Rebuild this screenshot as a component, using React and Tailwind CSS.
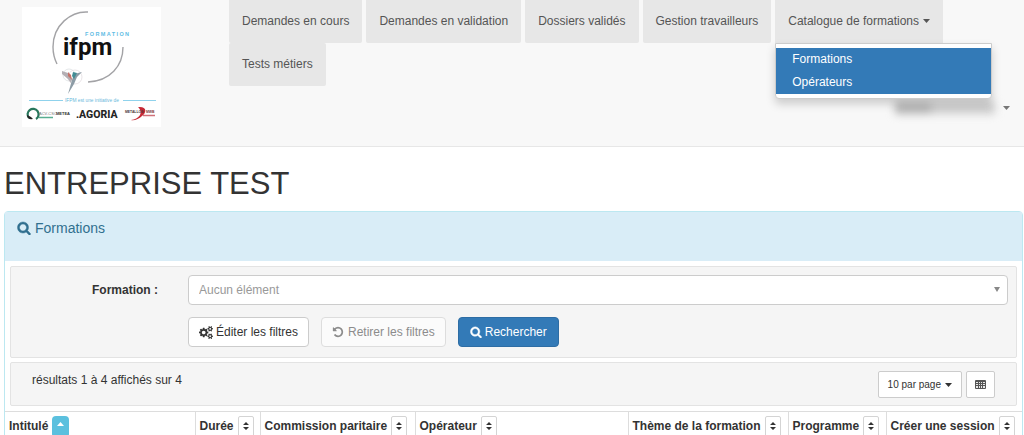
import React, { useState } from "react";

const navItems = [
  "Demandes en cours",
  "Demandes en validation",
  "Dossiers validés",
  "Gestion travailleurs",
];

const columns = [
  { label: "Intitulé", width: "w-[190px]", sorted: true },
  { label: "Durée", width: "w-[65px]" },
  { label: "Commission paritaire", width: "w-[155px]" },
  { label: "Opérateur", width: "w-auto" },
  { label: "Thème de la formation", width: "w-[160px]" },
  { label: "Programme", width: "w-[98px]" },
  { label: "Créer une session", width: "w-[136px]" },
];

const SMALL_GEAR =
  "v140q0 16-149 31-12 27-30 52 51 113 51 138 0 4-4 7-122 71-124 71-8 0-46-47t-52-68q-20 2-30 2t-30-2q-14 21-52 68t-46 47q-2 0-124-71-4-3-4-7 0-25 51-138-18-25-30-52-149-15-149-31v-140q0-16 149-31 13-29 30-52-51-113-51-138 0-4 4-7 4-2 35-20t59-34 30-16q8 0 46 46.5t52 67.5q20-2 30-2t30 2q51-71 92-112l6-2q4 0 124 70 4 3 4 7 0 25-51 138 17 23 30 52 149 15 149 31z";

const SearchIcon = ({ className }) => (
  <svg viewBox="0 0 1792 1792" fill="currentColor" stroke="currentColor" strokeWidth="60" className={className}>
    <path d="M1216 832q0-185-131.5-316.5t-316.5-131.5-316.5 131.5-131.5 316.5 131.5 316.5 316.5 131.5 316.5-131.5 131.5-316.5zm512 832q0 52-38 90t-90 38q-54 0-90-38l-343-342q-179 124-399 124-143 0-273.5-55.5t-225-150-150-225-55.5-273.5 55.5-273.5 150-225 225-150 273.5-55.5 273.5 55.5 225 150 150 225 55.5 273.5q0 220-124 399l343 343q37 37 37 90z" />
  </svg>
);

const UndoIcon = () => (
  <svg viewBox="0 0 1792 1792" fill="currentColor" className="size-3">
    <path d="M1664 896q0 156-61 298t-164 245-245 164-298 61q-172 0-327-72.5t-264-204.5q-7-10-6.5-22.5t8.5-20.5l137-138q10-9 25-9 16 2 23 12 73 95 179 147t225 52q104 0 198.5-40.5t163.5-109.5 109.5-163.5 40.5-198.5-40.5-198.5-109.5-163.5-163.5-109.5-198.5-40.5q-98 0-188 35.5t-160 101.5l137 138q31 30 14 69-17 40-59 40h-448q-26 0-45-19t-19-45v-448q0-42 40-59 39-17 69 14l130 129q107-101 244.5-156.5t284.5-55.5q156 0 298 61t245 164 164 245 61 298z" />
  </svg>
);

const CogsIcon = () => (
  <svg viewBox="-64 0 1920 1792" fill="currentColor" className="h-[13px] w-[14px]">
    <path d="M832 896q0-106-75-181t-181-75-181 75-75 181 75 181 181 75 181-75 75-181zm384-91v185q0 10-7 19.5t-16 10.5l-155 24q-11 35-32 76 34 48 90 115 7 11 7 20 0 12-7 19-23 30-82.5 89.5t-78.5 59.5q-11 0-21-7l-115-90q-37 19-77 31-11 108-23 155-7 24-30 24h-186q-11 0-20-7.5t-10-17.5l-23-153q-34-10-75-31l-118 89q-7 7-20 7-11 0-21-8-144-133-144-160 0-9 7-19 10-14 41-53t47-61q-23-44-35-82l-152-24q-10-1-17-9.5t-7-19.5v-185q0-10 7-19.5t16-10.5l155-24q11-35 32-76-34-48-90-115-7-11-7-20 0-12 7-20 22-30 82-89t79-59q11 0 21 7l115 90q34-18 77-32 11-108 23-154 7-24 30-24h186q11 0 20 7.5t10 17.5l23 153q34 10 75 31l118-89q8-7 20-7 11 0 21 8 144 133 144 160 0 8-7 19-12 16-42 54t-45 60q23 48 34 82l152 23q10 2 17 10.5t7 19.5z" />
    <path d={`M1600 1408q0-52-38-90t-90-38-90 38-38 90q0 53 37.500 90.500t90.500 37.500 90.500-37.500 37.500-90.500zM1856 1338${SMALL_GEAR}`} />
    <path d={`M1600 384q0-52-38-90t-90-38-90 38-38 90q0 53 37.500 90.500t90.500 37.500 90.500-37.500 37.500-90.500zM1856 314${SMALL_GEAR}`} />
  </svg>
);

const TableIcon = () => (
  <svg viewBox="0 0 11 9" className="h-[9px] w-[11px]">
    <rect width="11" height="9" rx="1" fill="#555" />
    <path d="M1 2h2v1H1zM4 2h1v1H4zM6 2h1v1H6zM8 2h2v1H8zM1 4h2v1H1zM4 4h1v1H4zM6 4h1v1H6zM8 4h2v1H8zM1 6h2v2H1zM4 6h1v2H4zM6 6h1v2H6zM8 6h2v2H8z" fill="#e8e8e8" />
  </svg>
);

const Caret = () => (
  <svg viewBox="0 0 7 4" fill="currentColor" className="h-1 w-[7px]">
    <path d="M0 0h7L3.500 4z" />
  </svg>
);

const Logo = () => (
  <svg viewBox="0 0 139 120" className="h-[120px] w-[139px]" role="img" aria-label="ifpm formation">
    <rect width="139" height="120" fill="#fff" />
    <g fill="none" stroke="#a3a3a6" strokeWidth="1.400">
      <path d="M66 5C49 4 31 18 31 40q0 9 4 17" />
      <path d="M101 40c0 19-13 34-35 35" />
    </g>
    <text x="41" y="48" fontFamily="Roboto, sans-serif" fontWeight="700" fontSize="24" fill="#111">ifpm</text>
    <text x="63" y="29" fontFamily="Liberation Sans, sans-serif" fontWeight="700" fontSize="5.500" letterSpacing="1.400" fill="#5fbde4">FORMATION</text>
    {/* bird */}
    <g fill="none" strokeWidth="0.700">
      <circle cx="47" cy="68" r="6" stroke="#d9dde0" />
      <circle cx="53" cy="70" r="7" stroke="#e0d9dc" />
    </g>
    <path d="M40 64l6 2 4 6-1 4-3-4-6-5z" fill="#b5b0b5" />
    <path d="M46 65l3 3 1 5-4-4z" fill="#c8736a" />
    <path d="M60 65l-8 2-2 6-4 14 6-10 3-7z" fill="#8d9ca6" />
    <path d="M51 65l4 1-3 6-2-3z" fill="#438c94" />
    <path d="M7 93.500h34M101 93.500h33" stroke="#8fd2ec" strokeWidth="1" />
    <text x="43" y="95" fontFamily="Liberation Sans, sans-serif" fontSize="4.800" fill="#69b9db">IFPM est une initiative de</text>
    <path d="M7 111a5.500 5.500 0 1 1 7 1" fill="none" stroke="#28775c" strokeWidth="2.200" />
    <path d="M5 108q0 5 6 4l-2-2z" fill="#222" />
    <text x="17" y="108" fontFamily="Liberation Sans, sans-serif" fontSize="4" fill="#777">ACV-CSC</text>
    <text x="34" y="108" fontFamily="Liberation Sans, sans-serif" fontWeight="700" fontSize="4" fill="#333">METEA</text>
    <path d="M17 110.500h14" stroke="#58ae91" strokeWidth="1.500" />
    <text x="54" y="111" fontFamily="Roboto, sans-serif" fontWeight="800" fontSize="10.500" fill="#252525">.AGORIA</text>
    <path d="M116 100c9-1 9 5 4 9-3 3-8 5-11 4 8-1 13-7 7-13z" fill="#c62935" />
    <text x="103" y="106" fontFamily="Liberation Sans, sans-serif" fontWeight="700" fontSize="3.400" fill="#4a3538">METALLOS</text>
    <text x="124" y="106" fontFamily="Liberation Sans, sans-serif" fontWeight="700" fontSize="3.400" fill="#7a3a40">MWB</text>
    <path d="M121 108.500h12" stroke="#d0707a" strokeWidth="1.500" />
  </svg>
);

const SortButton = ({ sorted, label }) =>
  sorted ? (
    <button
      aria-label={`Trier par ${label}`}
      className="flex h-[22px] w-[17px] items-start justify-center rounded-sm bg-[#5bc0de] pt-1.5 text-white"
    >
      <svg viewBox="0 0 7 4" fill="currentColor" className="h-1 w-[7px]">
        <path d="M0 4h7L3.500 0z" />
      </svg>
    </button>
  ) : (
    <button
      aria-label={`Trier par ${label}`}
      className="flex h-[22px] w-4 items-start justify-center rounded-xs border border-[#d4d4d4] bg-white pt-[5px]"
    >
      <svg viewBox="0 0 6 8" fill="currentColor" className="h-2 w-1.5">
        <path d="M0 3h6L3 0zM0 5h6L3 8z" />
      </svg>
    </button>
  );

const Header = ({ open, onToggle }) => (
  <header className="flex min-h-[147px] items-start border-b border-[#e7e7e7] bg-[#f8f8f8] pl-[22px]">
    <a href="#" className="mt-[7px] shrink-0">
      <Logo />
    </a>
    <div className="ml-[68px] flex flex-1 flex-col">
      <nav>
        <ul className="flex flex-wrap gap-x-1 text-[#555]">
          {navItems.map((item) => (
            <li key={item}>
              <a href="#" className="block rounded-b-xs bg-[#e7e7e7] px-[13px] pt-[13px] pb-[14px] leading-4">
                {item}
              </a>
            </li>
          ))}
          <li className="relative">
            <button
              onClick={onToggle}
              aria-expanded={open}
              className="flex items-center gap-1 bg-[#e7e7e7] px-[13px] pt-[13px] pb-[14px] leading-4"
            >
              Catalogue de formations
              <Caret />
            </button>
            {open && (
              <ul className="absolute top-full left-0 z-10 w-[217px] rounded-b-sm border border-[#ccc] bg-white py-1 text-white shadow-[0_5px_10px_rgba(0,0,0,0.18)]">
                <li>
                  <a href="#" className="block bg-[#337ab7] px-4 py-[3px] leading-[17px]">
                    Formations
                  </a>
                </li>
                <li>
                  <a href="#" className="block bg-[#337ab7] px-4 py-[3px] leading-[17px]">
                    Opérateurs
                  </a>
                </li>
              </ul>
            )}
          </li>
          <li>
            <a href="#" className="block rounded-xs bg-[#e7e7e7] px-[13px] pt-[13px] pb-[14px] leading-4">
              Tests métiers
            </a>
          </li>
        </ul>
      </nav>
      <button
        aria-label="Compte utilisateur"
        className="mt-4 mr-[14px] flex items-center gap-2 self-end text-[#777]"
      >
        <span className="flex blur-[4px]">
          <span className="h-3 w-9 bg-[#b4b4b4]"></span>
          <span className="h-3 w-16 bg-[#ccc]"></span>
        </span>
        <Caret />
      </button>
    </div>
  </header>
);

const App = () => {
  const [menuOpen, setMenuOpen] = useState(true);

  return (
    <div className="bg-white font-['Liberation_Sans',Arial,sans-serif] text-[12px] text-[#333]">
      <Header open={menuOpen} onToggle={() => setMenuOpen(!menuOpen)} />

      <main className="pt-[19px] pr-px pl-1">
        <h1 className="text-[31px] leading-9">ENTREPRISE TEST</h1>

        <section className="mt-[9px] rounded-t-sm border border-[#bce8f1]">
          <div className="flex min-h-[49px] items-start gap-1 bg-[#d9edf7] px-3 pt-2 text-[#31708f]">
            <SearchIcon className="mt-px size-[14px]" />
            <h2 className="text-[14px] leading-4">Formations</h2>
          </div>

          <div className="p-[5px]">
            {/* filters */}
            <form
              onSubmit={(e) => e.preventDefault()}
              className="rounded-xs border border-[#e3e3e3] bg-[#f5f5f5] pt-2 pr-2 pb-2.5 pl-4"
            >
              <div className="flex items-center">
                <label htmlFor="formation" className="w-[131px] text-right font-bold">
                  Formation :
                </label>
                <div className="relative ml-[30px] flex-1">
                  <select
                    id="formation"
                    className="block h-[30px] w-full appearance-none rounded-sm border border-[#ccc] bg-white px-2.5 text-[#999]"
                  >
                    <option>Aucun élément</option>
                  </select>
                  <svg viewBox="0 0 6 5" className="pointer-events-none absolute top-3 right-2 h-[5px] w-1.5" fill="#888">
                    <path d="M0 0h6L3 5z" />
                  </svg>
                </div>
              </div>
              <div className="mt-3 ml-[161px] flex gap-3">
                <button type="button" className="flex h-[30px] items-center gap-[3px] rounded-sm border border-[#ccc] bg-white px-2.5">
                  <CogsIcon />
                  Éditer les filtres
                </button>
                <button type="button" disabled className="flex h-[30px] items-center gap-1 rounded-sm border border-[#ddd] bg-[#fbfbfb] px-2.5 text-[#8c8c8c]">
                  <UndoIcon />
                  Retirer les filtres
                </button>
                <button type="submit" className="flex h-[30px] items-center gap-[3px] rounded-sm border border-[#2e6da4] bg-[#337ab7] px-[11px] text-white">
                  <SearchIcon className="size-3" />
                  Rechercher
                </button>
              </div>
            </form>

            {/* results */}
            <div className="mt-1 flex min-h-[44px] items-start justify-between rounded-xs border border-[#e3e3e3] bg-[#f5f5f5] pt-2 pr-[21px] pl-[21px]">
              <span className="leading-[18px]">résultats 1 à 4 affichés sur 4</span>
              <div className="flex gap-1">
                <button className="flex h-[27px] items-center gap-1 rounded-xs border border-[#ccc] bg-white px-[9px] text-[10px]">
                  10 par page
                  <Caret />
                </button>
                <button aria-label="Colonnes" className="flex h-[27px] w-[29px] items-center justify-center rounded-xs border border-[#ccc] bg-white">
                  <TableIcon />
                </button>
              </div>
            </div>
          </div>

          <table className="w-full table-fixed border-collapse border-t border-[#ddd]">
            <thead>
              <tr>
                {columns.map((col) => (
                  <th
                    key={col.label}
                    className={`${col.width} border-r border-[#ddd] px-1 pt-1 font-bold whitespace-nowrap last:border-r-0`}
                  >
                    <div className="flex items-start gap-1">
                      <span className="leading-5">{col.label}</span>
                      <SortButton sorted={col.sorted} label={col.label} />
                    </div>
                  </th>
                ))}
              </tr>
            </thead>
          </table>
        </section>
      </main>
    </div>
  );
};

export default App;
